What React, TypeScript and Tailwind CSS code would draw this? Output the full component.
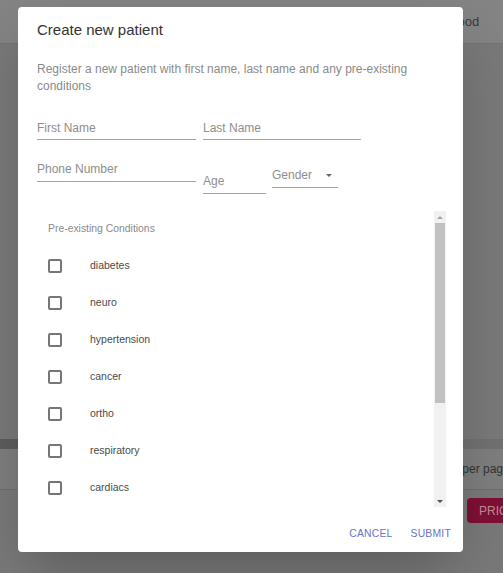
import { useState } from "react";

// 대화상자 뒤 배경 페이지는 오버레이에 가려 어둡게 보인다.
const CONDITIONS = [
  "diabetes",
  "neuro",
  "hypertension",
  "cancer",
  "ortho",
  "respiratory",
  "cardiacs",
  "kidney",
  "others",
];

function Field({
  label,
  className,
}: {
  label: string;
  className?: string;
}) {
  return (
    <div
      className={`border-b border-[#a3a3a3] pb-[3px] text-[12px] leading-[15px] text-[#8e8e8e] ${className ?? ""}`}
    >
      {label}
    </div>
  );
}

function ConditionRow({ label }: { label: string }) {
  const [checked, setChecked] = useState(false);
  return (
    <label className="flex h-[37px] cursor-pointer items-center pl-[11px]">
      <span
        onClick={() => setChecked((v) => !v)}
        className={`h-[14px] w-[14px] rounded-[2px] border-2 ${checked ? "border-[#3f51b5] bg-[#3f51b5]" : "border-[#767676]"}`}
      />
      <span className="ml-[28px] text-[10.5px] text-[#4a4a4a]">{label}</span>
    </label>
  );
}

export default function App() {
  return (
    <div className="relative h-[573px] w-[503px] overflow-hidden bg-[#787878] font-['Liberation_Sans',Arial,sans-serif]">
      {/* dimmed page */}
      <div className="flex h-full flex-col">
        <div className="flex h-[44px] items-center border-b border-[#717171] bg-[#838383]">
          <span className="ml-[446px] text-[13px] text-[#383838]">Blood</span>
        </div>
        <div className="flex-1" />
        <div className="flex h-[10px]">
          <div className="w-[60px] bg-[#5c5c5c]" />
          <div className="flex-1 bg-[#707070]" />
        </div>
        <div className="flex h-[41px] items-center border-b border-[#6e6e6e] bg-[#7d7d7d]">
          <span className="ml-[429px] whitespace-nowrap text-[12px] text-[#333]">
            Rows per page
          </span>
        </div>
        <div className="flex h-[83px] items-start pt-[8px]">
          <div className="ml-[467px] flex h-[25px] w-[80px] items-center rounded-[4px] bg-[#7e0f35] pl-[12px] text-[12px] text-[#c4899c]">
            PRIC
          </div>
        </div>
      </div>

      {/* dialog */}
      <div className="absolute left-[18px] top-[7px] flex h-[545px] w-[445px] flex-col rounded-[4px] bg-white shadow-2xl">
        <h2 className="px-[19px] pt-[12px] text-[15px] leading-[22px] text-[#333]">
          Create new patient
        </h2>
        <p className="mt-[20px] px-[19px] text-[12px] leading-[17px] text-[#8a8a8a]">
          Register a new patient with first name, last name and any pre-existing
          conditions
        </p>

        <div className="mt-[26px] flex gap-[7px] px-[19px]">
          <Field label="First Name" className="w-[159px]" />
          <Field label="Last Name" className="w-[158px]" />
        </div>

        <div className="mt-[22px] flex items-start px-[19px]">
          <Field label="Phone Number" className="w-[159px] !pb-[4px]" />
          <Field label="Age" className="ml-[7px] mt-[12px] w-[63px] !pb-[4px]" />
          <div className="ml-[6px] mt-[6px] flex w-[66px] items-center justify-between border-b border-[#a3a3a3] pb-[4px] text-[12px] leading-[15px] text-[#8e8e8e]">
            <span>Gender</span>
            <span className="mr-[6px] h-0 w-0 border-x-[3.5px] border-t-[3.5px] border-x-transparent border-t-[#666]" />
          </div>
        </div>

        <div className="ml-[19px] mt-[17px] flex h-[296px] w-[409px]">
          <div className="flex-1 overflow-hidden">
            <div className="flex h-[36px] items-center pb-[1px] pl-[11px] text-[10.4px] text-[#8a8a8a]">
              Pre-existing Conditions
            </div>
            {CONDITIONS.map((c) => (
              <ConditionRow key={c} label={c} />
            ))}
          </div>
          <div className="flex w-[12px] flex-col bg-[#f1f1f1]">
            <div className="flex h-[12px] items-center justify-center">
              <span className="h-0 w-0 border-x-[3px] border-b-[3px] border-x-transparent border-b-[#a3a3a3]" />
            </div>
            <div className="mx-[1px] h-[180px] bg-[#c1c1c1]" />
            <div className="flex-1" />
            <div className="flex h-[12px] items-center justify-center">
              <span className="h-0 w-0 border-x-[3px] border-t-[3px] border-x-transparent border-t-[#505050]" />
            </div>
          </div>
        </div>

        <div className="flex flex-1 items-center justify-end gap-[18px] pr-[12px] pt-[8px] text-[10.4px] tracking-[0.2px] text-[#6a72c6]">
          <button>CANCEL</button>
          <button>SUBMIT</button>
        </div>
      </div>
    </div>
  );
}
